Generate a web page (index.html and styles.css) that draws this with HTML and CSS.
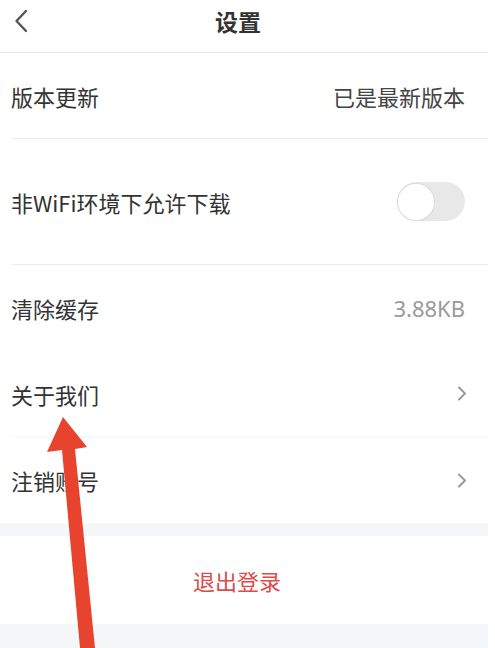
FILE: index.html
```html
<!DOCTYPE html>
<html lang="zh">
<head>
<meta charset="utf-8">
<title>设置</title>
<link rel="stylesheet" href="styles.css">
</head>
<body>
<div class="screen">
  <header class="topbar">
    <span class="back">
      <svg width="14" height="24" viewBox="0 0 14 24"><path d="M12 2 L2.5 12 L12 22" fill="none" stroke="#555" stroke-width="2.4" stroke-linecap="round" stroke-linejoin="round"/></svg>
    </span>
    <h1 class="title">设置</h1>
    <span></span>
  </header>
  <section class="list">
    <div class="row row-a line"><span class="label">版本更新</span><span class="value dark">已是最新版本</span></div>
    <div class="row row-b line"><span class="label">非WiFi环境下允许下载</span><span class="toggle"><span class="knob"></span></span></div>
    <div class="row row-c"><span class="label">清除缓存</span><span class="value light">3.88KB</span></div>
    <div class="row row-c faint"><span class="label">关于我们</span><span class="chev"><svg width="10" height="15" viewBox="0 0 10 15"><path d="M2 1.5 L8 7.5 L2 13.5" fill="none" stroke="#9a9a9a" stroke-width="2" stroke-linecap="round" stroke-linejoin="round"/></svg></span></div>
    <div class="row row-c"><span class="label">注销账号</span><span class="chev"><svg width="10" height="15" viewBox="0 0 10 15"><path d="M2 1.5 L8 7.5 L2 13.5" fill="none" stroke="#9a9a9a" stroke-width="2" stroke-linecap="round" stroke-linejoin="round"/></svg></span></div>
  </section>
  <div class="gap"></div>
  <div class="logout">退出登录</div>
  <div class="bottom"></div>
</div>
<svg class="arrow" width="495" height="648" viewBox="0 0 495 648"><polygon points="63,417 87,447 75,449 95,648 80,648 62,450 47,452" fill="#e8432f"/></svg>
</body>
</html>
```
FILE: styles.css
```css
html, body {
  margin: 0;
  padding: 0;
  background: #fff;
}
body {
  width: 495px;
  height: 648px;
  overflow: hidden;
  position: relative;
  font-family: "Noto Sans CJK SC", "Noto Sans", sans-serif;
  color: #333;
}
.screen {
  width: 488px;
  height: 648px;
  display: flex;
  flex-direction: column;
  background: #fff;
}
.topbar {
  height: 52px;
  border-bottom: 1px solid #e6e6e6;
  display: grid;
  grid-template-columns: 1fr auto 1fr;
  align-items: center;
  padding: 0 26px 0 14px;
  box-sizing: content-box;
}
.back {
  display: flex;
  align-items: center;
  height: 24px;
  margin-top: -11px;
}
.title {
  margin: -10px 0 0 0;
  font-size: 23px;
  font-weight: 700;
  color: #333;
  line-height: 1;
}
.list {
  padding-left: 12px;
  display: flex;
  flex-direction: column;
}
.row {
  display: flex;
  align-items: center;
  justify-content: space-between;
  padding-right: 23px;
  font-size: 22px;
  box-sizing: border-box;
}
.label {
  margin-left: -1px;
  color: #333;
}
.row-a { height: 86px; }
.row-b { height: 126px; }
.row-c { height: 86px; }
.line { border-bottom: 1px solid #ececec; }
.faint { border-bottom: 1px solid #f6f6f6; }
.value.dark { color: #444; }
.value.light { color: #9a9a9a; font-family: "Noto Sans", sans-serif; }
.toggle {
  width: 68px;
  height: 39px;
  border-radius: 20px;
  background: #e8e8e8;
  display: flex;
  align-items: center;
  padding-left: 1px;
  box-sizing: border-box;
}
.knob {
  width: 36px;
  height: 36px;
  border-radius: 50%;
  background: #fff;
  box-shadow: 0 0 0 1px #dcdcdc, 0 1px 2px rgba(0,0,0,0.08);
}
.chev {
  display: flex;
  align-items: center;
  margin-right: -2px;
}
.gap {
  height: 13px;
  background: #f5f6f8;
}
.logout {
  height: 88px;
  display: flex;
  align-items: center;
  justify-content: center;
  padding-right: 14px;
  font-size: 22px;
  color: #df4a4a;
  background: #fff;
}
.bottom {
  flex: 1;
  background: #f5f6f8;
}
.arrow {
  position: absolute;
  left: 0;
  top: 0;
  pointer-events: none;
}
```
